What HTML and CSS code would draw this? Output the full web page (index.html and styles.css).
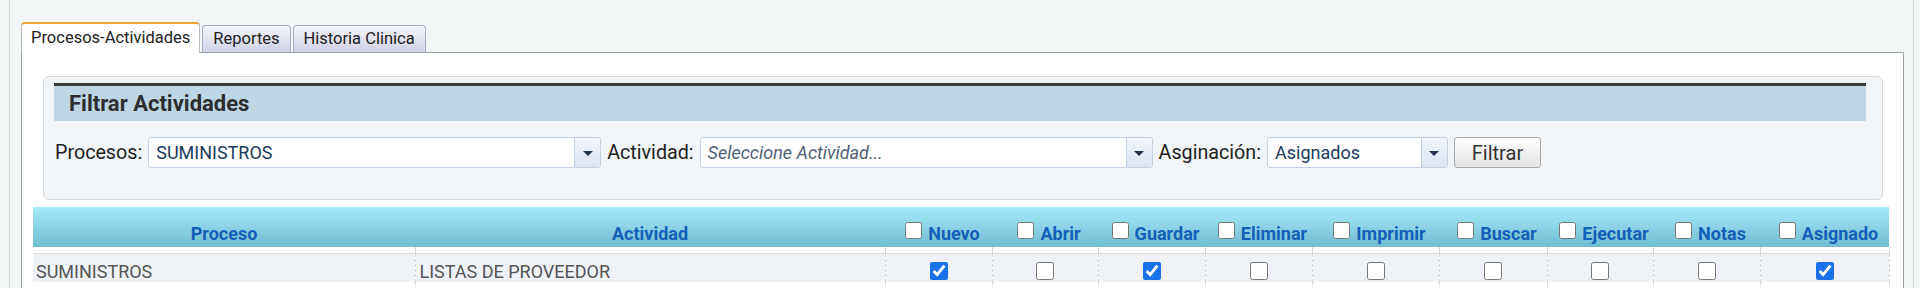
FILE: index.html
```html
<!DOCTYPE html>
<html lang="es">
<head>
<meta charset="utf-8">
<title>Procesos-Actividades</title>
<link rel="stylesheet" href="styles.css">
</head>
<body>
<div class="page">
  <div class="tabs">
    <div class="tab active">Procesos-Actividades</div>
    <div class="tab">Reportes</div>
    <div class="tab">Historia Clinica</div>
  </div>
  <div class="panel">
    <div class="filter">
      <div class="filter-head">Filtrar Actividades</div>
      <div class="filter-row">
        <span class="lbl">Procesos:</span>
        <div class="combo wide"><span class="val">SUMINISTROS</span><span class="drop"><i class="tri"></i></span></div>
        <span class="lbl">Actividad:</span>
        <div class="combo wide"><span class="val ph">Seleccione Actividad...</span><span class="drop"><i class="tri"></i></span></div>
        <span class="lbl">Asginación:</span>
        <div class="combo narrow"><span class="val">Asignados</span><span class="drop"><i class="tri"></i></span></div>
        <button class="btn-filtrar" type="button">Filtrar</button>
      </div>
    </div>
    <table class="grid">
      <colgroup>
        <col class="c-proc"><col class="c-act"><col class="c-107"><col class="c-106"><col class="c-107"><col class="c-107"><col class="c-127"><col class="c-108"><col class="c-106"><col class="c-107"><col class="c-129">
      </colgroup>
      <thead>
        <tr>
          <th>Proceso</th>
          <th>Actividad</th>
          <th class="chk"><input type="checkbox">Nuevo</th>
          <th class="chk"><input type="checkbox">Abrir</th>
          <th class="chk"><input type="checkbox">Guardar</th>
          <th class="chk"><input type="checkbox">Eliminar</th>
          <th class="chk"><input type="checkbox">Imprimir</th>
          <th class="chk"><input type="checkbox">Buscar</th>
          <th class="chk"><input type="checkbox">Ejecutar</th>
          <th class="chk"><input type="checkbox">Notas</th>
          <th class="chk"><input type="checkbox">Asignado</th>
        </tr>
      </thead>
      <tbody>
        <tr class="gap"><td></td><td></td><td></td><td></td><td></td><td></td><td></td><td></td><td></td><td></td><td></td></tr>
        <tr class="data">
          <td class="first">SUMINISTROS</td>
          <td>LISTAS DE PROVEEDOR</td>
          <td><input type="checkbox" checked></td>
          <td><input type="checkbox"></td>
          <td><input type="checkbox" checked></td>
          <td><input type="checkbox"></td>
          <td><input type="checkbox"></td>
          <td><input type="checkbox"></td>
          <td><input type="checkbox"></td>
          <td><input type="checkbox"></td>
          <td><input type="checkbox" checked></td>
        </tr>
        <tr class="tail"><td></td><td></td><td></td><td></td><td></td><td></td><td></td><td></td><td></td><td></td><td></td></tr>
      </tbody>
    </table>
  </div>
</div>
</body>
</html>
```
FILE: styles.css
```css
html, body {
  margin: 0;
  padding: 0;
}
body {
  background: #f3f6f7;
  font-family: Roboto, "Liberation Sans", Arial, sans-serif;
  height: 288px;
  overflow: hidden;
  color: #222;
}
.page {
  margin: 0 6px 0 9px;
  border-left: 1px solid #d4d9dc;
  border-right: 1px solid #d4d9dc;
  padding: 22px 9px 0 11px;
  min-height: 320px;
}

/* tabs */
.tabs {
  display: flex;
  align-items: flex-end;
  gap: 2px;
  height: 30px;
}
.tab {
  box-sizing: border-box;
  height: 27px;
  padding: 3px 10px 0;
  line-height: 20px;
  font-size: 16.5px;
  color: #222;
  border: 1px solid #a7aec0;
  border-bottom: none;
  border-radius: 4px 4px 0 0;
  background: linear-gradient(#f5f5fb, #d0d2e6);
  white-space: nowrap;
}
.tab.active {
  position: relative;
  z-index: 1;
  height: 31px;
  margin-bottom: -1px;
  padding: 4px 9px 0;
  background: #fff;
  border-color: #b4baba;
  border-top: 2px solid #f1a331;
}

/* panel */
.panel {
  background: #fff;
  border: 1px solid #97a1a1;
  padding: 23px 14px 0 11px;
  min-height: 300px;
}

/* filter box */
.filter {
  margin: 0 6px 0 10px;
  border: 1px solid #d6dadd;
  border-radius: 6px;
  background: #f2f5f7;
  padding: 6px 16px 31px 10px;
}
.filter-head {
  border-top: 3px solid #3e3e3e;
  background: #bed6e4;
  height: 35px;
  line-height: 35px;
  padding-left: 15px;
  font-size: 22px;
  font-weight: 700;
  color: #2e2e2e;
}
.filter-row {
  display: flex;
  align-items: center;
  gap: 6px;
  margin-top: 16px;
  padding-left: 1px;
}
.lbl {
  font-size: 19.7px;
  color: #1e1e1e;
  white-space: nowrap;
}
.combo {
  display: flex;
  box-sizing: border-box;
  height: 31px;
  border: 1px solid #c3d1e2;
  border-radius: 3px;
  background: #fff;
  flex: none;
}
.combo.wide { width: 453px; }
.combo.narrow { width: 181px; }
.combo .val {
  flex: 1;
  padding-left: 7px;
  font-size: 18px;
  line-height: 29px;
  color: #203a5e;
  white-space: nowrap;
  overflow: hidden;
}
.combo .val.ph {
  font-style: italic;
  color: #4f5f77;
}
.combo .drop {
  width: 25px;
  border-left: 1px solid #c3d1e2;
  border-radius: 0 3px 3px 0;
  background: linear-gradient(#f3f6fb, #dae4f1);
  display: flex;
  align-items: center;
  justify-content: center;
}
.tri {
  display: block;
  width: 0;
  height: 0;
  margin-top: 1px;
  border-left: 5px solid transparent;
  border-right: 5px solid transparent;
  border-top: 5px solid #22324d;
}
.btn-filtrar {
  box-sizing: border-box;
  width: 87px;
  height: 31px;
  border: 1px solid #a9a9a9;
  border-radius: 3px;
  background: linear-gradient(#fdfdfd, #e4e4e4);
  font-family: inherit;
  font-size: 20px;
  color: #333;
  padding: 0;
  flex: none;
}

/* grid */
.grid {
  margin-top: 7px;
  width: 100%;
  border-collapse: collapse;
  table-layout: fixed;
}
.c-proc { width: 382px; }
.c-act { width: 470px; }
.c-106 { width: 106px; }
.c-107 { width: 107px; }
.c-108 { width: 108px; }
.c-127 { width: 127px; }
.c-129 { width: 129px; }

.grid thead tr { height: 40px; }
.grid th {
  padding: 12px 0 0;
  background: linear-gradient(#a7eafb, #6fbcd1);
  color: #1260b8;
  font-size: 18px;
  font-weight: 700;
  text-align: center;
  vertical-align: middle;
  white-space: nowrap;
}
.grid th.chk { padding-left: 8px; }
.grid th input {
  width: 17px;
  height: 17px;
  margin: 0 6px 0 0;
  vertical-align: 1px;
  accent-color: #1a72ea;
}
.grid td {
  border-left: 1px dashed #d6d6d6;
  border-right: 1px dashed #d6d6d6;
  padding: 0 4px;
  font-size: 18px;
  color: #555;
  white-space: nowrap;
  overflow: hidden;
}
.grid td:first-child { border-left: none; }
.grid tr.gap { height: 6px; }
.grid tr.gap td { background: #fff; }
.grid tr.data { height: 29px; }
.grid tr.data td {
  background: #eff3f8;
  border-top: 1px solid #dcdcdc;
  padding-top: 7px;
  vertical-align: top;
  line-height: 21px;
}
.grid tr.data td.first { padding-left: 3px; }
.grid tr.data td input {
  display: block;
  width: 18px;
  height: 18px;
  margin: 1px auto 0;
  accent-color: #1a72ea;
}
.grid tr.tail { height: 30px; }
.grid tr.tail td { background: #fff; }
```
